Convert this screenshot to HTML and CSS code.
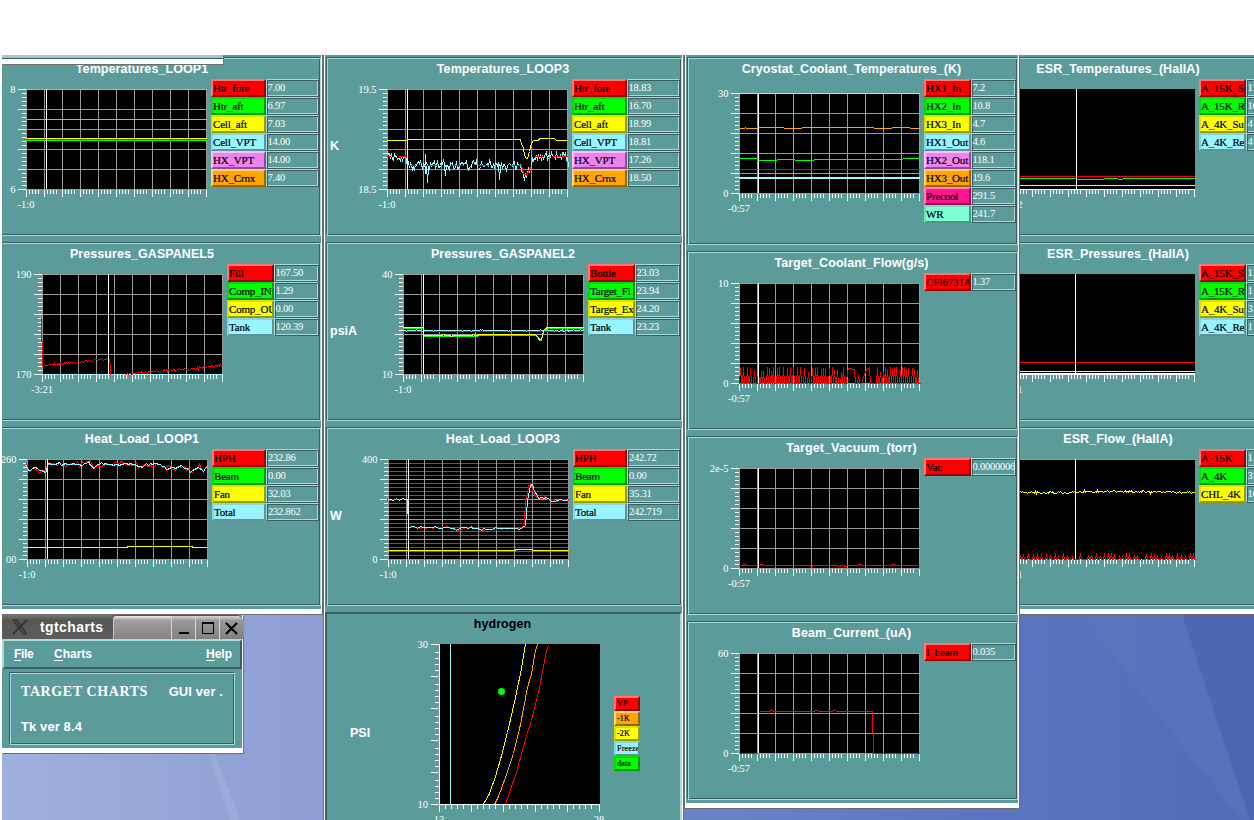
FILE: index.html
```html
<!DOCTYPE html>
<html lang="en">

<head>
    <meta charset="UTF-8">
    <title>tgtcharts</title>
    <link rel="stylesheet" href="styles.css">
</head>

<body>

    <div class="desktop">
        <svg class="wallpaper" width="1252" height="765" viewBox="2 55 1252 765" preserveAspectRatio="none">
            <defs>
                <linearGradient id="wall" x1="0" y1="0" x2="1" y2="0">
                    <stop offset="0" stop-color="#a0b0de" />
                    <stop offset="0.26" stop-color="#8b9dd2" />
                    <stop offset="0.54" stop-color="#6b84c8" />
                    <stop offset="0.8" stop-color="#5a75c0" />
                    <stop offset="1" stop-color="#526bb6" />
                </linearGradient>
            </defs>
            <rect x="2" y="55" width="1252" height="765" fill="url(#wall)" />
            <path d="M207 750 L214 750 L240 820 L230 820Z" fill="#a9b8e4" opacity="0.4" />
            <path d="M1080 614 L1182 614 L1250 820 L1240 820Z" fill="#5f7ac2" opacity="0.35" />
            <path d="M1182 614 L1254 614 L1254 820 L1250 820Z" fill="#4f67b2" />
        </svg>

        <div class="window win-esr" id="esr"></div>
        <div class="window win-loop1" id="loop1"></div>
        <div class="window win-loop3" id="loop3"></div>
        <div class="window win-cryo" id="cryo"></div>

        <div class="window-edge"></div>

        <div class="app">
            <div class="titlebar">
                <div class="caption">
                    <svg width="16" height="16" viewBox="0 0 16 16">
                        <path d="M1 1h4l10 14h-4z" fill="#4a4a4a" stroke="#2a2a2a" />
                        <path d="M15 1L1 15" stroke="#2a2a2a" stroke-width="1.5" />
                    </svg>
                    <span>tgtcharts</span>
                </div>
                <div class="grip"></div>
                <div class="btn"><svg width="16" height="16"><path d="M3 13h10" stroke="#000" stroke-width="2" /></svg></div>
                <div class="btn"><svg width="16" height="16"><path d="M2.5 3v10.500h11v-10.500M2 3h12" fill="none" stroke="#000" /><path d="M2 3h12" stroke="#000" stroke-width="2" /></svg></div>
                <div class="btn last"><svg width="16" height="16"><path d="M2 3l11 11M13 3L2 14" stroke="#000" stroke-width="2.200" /></svg></div>
            </div>
            <div class="menubar">
                <span class="m-file"><u>F</u>ile</span>
                <span><u>C</u>harts</span>
                <span class="m-help"><u>H</u>elp</span>
            </div>
            <div class="about">
                <div class="about-row">
                    <span class="about-name">TARGET CHARTS</span>
                    <span>GUI ver .</span>
                </div>
                <div class="about-row">Tk ver 8.4</div>
            </div>
        </div>
    </div>

    <script src="charts.js"></script>
</body>

</html>
```
FILE: styles.css
```css
body {
    margin: 0;
    background-color: #fff;
    font-family: "Liberation Sans", Arial, sans-serif;
    overflow: hidden;
}

.desktop {
    position: relative;
    width: 1252px;
    height: 765px;
    margin: 55px 0 0 2px;
    overflow: hidden;
}

.wallpaper {
    display: block;
}

/* chart windows */
.window {
    position: absolute;
    top: 0;
    box-sizing: border-box;
    background-color: #5b9c9b;
    border: 1px solid #fff;
    border-top: none;
    border-bottom: 5px solid #fff;
    outline: 1px solid #706c6c;
    padding: 2px 0 3px 1px;
}

.win-loop1 {
    left: -39px;
    width: 359px;
    height: 559px;
}

.win-loop3 {
    left: 322px;
    width: 359px;
    height: 800px;
}

.win-cryo {
    left: 683px;
    width: 334px;
    height: 753px;
}

.win-esr {
    left: 941px;
    width: 351px;
    height: 559px;
}

.window-edge {
    position: absolute;
    left: 0;
    top: 0;
    box-sizing: border-box;
    width: 221px;
    height: 9px;
    background: linear-gradient(#a9c4c8 3px, #3c5f64 3px, #3c5f64 4px, #fff 4px);
    box-shadow: 1px 1px #706c6c;
}

.panel {
    box-sizing: border-box;
    height: 179px;
    margin-bottom: 6px;
    border: 1px solid;
    border-color: #3a5e62 #a8dcdb #a8dcdb #3a5e62;
    box-shadow: inset 1px 1px #a8dcdb, inset -1px -1px #3a5e62;
    padding: 1px;
    overflow: hidden;
}

.panel.tall {
    height: 188px;
}

.panel h2 {
    margin: 0;
    padding-right: 2px;
    height: 20px;
    line-height: 20px;
    font-size: 12.5px;
    font-weight: bold;
    text-align: center;
    letter-spacing: 0.07px;
    color: #fff;
    white-space: nowrap;
}

.panel-body {
    display: flex;
}

.unit {
    flex: 1;
    width: 0;
    padding: 59px 0 0 2px;
    font-size: 12.5px;
    line-height: 16px;
    font-weight: bold;
    color: #fff;
}

.plot {
    flex: none;
    overflow: visible;
    font-family: "Liberation Serif", serif;
    font-size: 10.5px;
}

.legend {
    flex: none;
    width: 92px;
}

.legend.wide {
    width: 108px;
}

.legend.mid {
    width: 107px;
}

.legend-row {
    display: flex;
    height: 18px;
    font-family: "Liberation Serif", serif;
    font-size: 11px;
    line-height: 14px;
}

.tag,
.value {
    flex: 1;
    width: 0;
    box-sizing: border-box;
    overflow: hidden;
    white-space: nowrap;
}

.tag {
    border: 2px solid;
    letter-spacing: -0.2px;
    color: #000;
    -webkit-text-stroke: 0.2px #000;
}

.value {
    border: 1px solid;
    border-color: #a8dcdb #3a5e62 #3a5e62 #a8dcdb;
    box-shadow: inset 1px 1px #3a5e62, inset -1px -1px #a8dcdb;
    padding: 1px 0 1px 1px;
    font-size: 10.5px;
    letter-spacing: -0.25px;
    color: #fff;
}

.red { background-color: #ff0000; border-color: #ff7474 #990000 #990000 #ff7474; }
.green { background-color: #00ff00; border-color: #00e000 #009900 #009900 #00e000; }
.yellow { background-color: #ffff00; border-color: #e0e000 #999900 #999900 #e0e000; }
.cyan { background-color: #98f5ff; border-color: #86d8e0 #5b9399 #5b9399 #86d8e0; }
.violet { background-color: #ee82ee; border-color: #f8c0f8 #8f4e8f #8f4e8f #f8c0f8; }
.orange { background-color: #ffa500; border-color: #ffd274 #996300 #996300 #ffd274; }
.pink { background-color: #ff1493; border-color: #ff80c4 #990c58 #990c58 #ff80c4; }
.aqua { background-color: #7fffd4; border-color: #70e0bb #4c997f #4c997f #70e0bb; }

/* phase diagram */
.phase {
    width: 357px;
    height: 240px;
    margin-left: -1px;
    border: 2px solid;
    border-color: #3a5e62 #a8dcdb #a8dcdb #3a5e62;
    box-shadow: none;
    padding: 0;
}

.phase h2 {
    color: #000;
}

.phase .unit {
    flex: none;
    box-sizing: border-box;
    width: 76px;
    padding: 91px 0 0 23px;
}

.phase .legend {
    width: 26px;
    padding-top: 62px;
}

.phase .legend-row {
    height: 15px;
    font-size: 8px;
    line-height: 11px;
}

.phase .tag {
    padding-left: 1px;
    letter-spacing: 0.2px;
}

/* tgtcharts window */
.app {
    position: absolute;
    left: 0;
    top: 560px;
    width: 240px;
    height: 133px;
    background-color: #5b9c9b;
    border-right: 1px solid #fff;
    border-bottom: 5px solid #fff;
    box-shadow: 1px 1px #706c6c;
    color: #fff;
    font-size: 12px;
    font-weight: bold;
}

.titlebar {
    display: flex;
    width: 242px;
    height: 24px;
    background-color: #555;
    clip-path: polygon(0 0, 236px 0, 242px 6px, 242px 24px, 0 24px);
}

.caption {
    display: flex;
    align-items: center;
    width: 111px;
    background: linear-gradient(#777, #565656 20%, #5c5c5c);
    font-size: 14px;
    letter-spacing: 0.4px;
}

.caption svg {
    margin: 0 12px 0 10px;
}

.grip {
    flex: 1;
    margin-top: 1px;
    border-left: 1px solid #c9c6c9;
    border-radius: 3px 0 0 0;
    background: linear-gradient(#f0eef0, #a29ea2 18%, #868286);
}

.btn {
    display: flex;
    align-items: center;
    justify-content: center;
    box-sizing: border-box;
    width: 24px;
    margin-top: 1px;
    border-left: 1px solid #d8d5d8;
    background: linear-gradient(#d8d5d8, #9a979a 20%, #838083);
}

.btn.last {
    width: 25px;
    padding-right: 1px;
}

.menubar {
    display: flex;
    box-sizing: border-box;
    height: 30px;
    border: 2px solid;
    border-color: #a8dcdb #3a5e62 #3a5e62 #a8dcdb;
    padding: 0 8px 0 10px;
    line-height: 26px;
}

.m-file {
    width: 40px;
    letter-spacing: -0.3px;
}

.m-help {
    margin-left: auto;
}

u {
    text-underline-offset: 2px;
}

.about {
    box-sizing: border-box;
    width: 226px;
    height: 73px;
    margin: 3px 0 0 7px;
    border: 1px solid;
    border-color: #3a5e62 #a8dcdb #a8dcdb #3a5e62;
    box-shadow: inset 1px 1px #a8dcdb, inset -1px -1px #3a5e62;
    padding: 1px 11px 0 11px;
    font-size: 13px;
}

.about-row {
    display: flex;
    justify-content: space-between;
    height: 35px;
    line-height: 35px;
    letter-spacing: 0.1px;
}

.about-name {
    font-family: "Liberation Serif", serif;
    font-size: 14px;
    letter-spacing: 0.6px;
}
```
FILE: charts.js
```javascript
var COLORS = {
    red: "#ff0000", green: "#00ff00", yellow: "#ffff00", cyan: "#98f5ff",
    violet: "#ee82ee", orange: "#ffa500", aqua: "#7fffd4", white: "#ffffff"
};

var seed = 7;
function rnd() {
    seed = (seed * 16807) % 2147483647;
    return seed / 2147483647;
}

// walk along a polyline and shake it by amp pixels
function noisy(points, amp, step) {
    var out = [];
    for (var i = 0; i < points.length - 1; i++) {
        var a = points[i], b = points[i + 1];
        if (b[0] - a[0] < step) {
            out.push(a);
            continue;
        }
        for (var x = a[0]; x < b[0]; x += step) {
            var y = a[1] + (b[1] - a[1]) * (x - a[0]) / (b[0] - a[0]);
            out.push([x, y + (rnd() + rnd() - 1) * amp]);
        }
    }
    out.push(points[points.length - 1]);
    return out;
}

function spikes(from, to, top, gap) {
    var out = [[from, 100]];
    for (var x = from + 1; x < to - 2; x += gap + Math.floor(rnd() * 3)) {
        out.push([x, 100], [x + 1, top + Math.floor(rnd() * rnd() * 8)], [x + 2, 100]);
    }
    out.push([to, 100]);
    return out;
}

function flat(y) {
    return [[-1, y], [180, y]];
}

function rect(x, y, w, h, color) {
    return '<rect x="' + x + '" y="' + y + '" width="' + w + '" height="' + h + '" fill="' + color + '"/>';
}

function drawLine(color, points) {
    var p = points.map(function (pt) {
        return (pt[0] + 0.5) + "," + (Math.round(pt[1]) + 0.5);
    }).join(" ");
    return '<polyline points="' + p + '" fill="none" stroke="' + COLORS[color] + '"/>';
}

function text(x, y, anchor, str) {
    return '<text x="' + x + '" y="' + y + '" text-anchor="' + anchor + '" fill="#fff">' + str + '</text>';
}

function drawPlot(c) {
    var i, s = "", x0 = 36, y0 = c.drop || 10;
    s += rect(0, 0, 181, 101, "#000");
    if (c.fine) {
        for (i = 4; i < 100; i += 4) s += rect(0, i, 181, 1, "#5a5a5a");
    }
    if (!c.plain) {
        for (i = 0; i <= 180; i += 18) s += rect(i, 0, 1, 101, "#999");
        for (i = 0; i <= 100; i += 20) s += rect(0, i, 181, 1, "#999");
    } else {
        s += rect(0, 100, 181, 1, "#fff");
    }
    for (i = 0; i <= 100; i += 4) {
        s += i % 20 ? rect(-4, i, 4, 1, "#fff") : rect(-8, i, 8, 1, "#fff");
    }
    for (i = 0; i <= 180; i += 18) {
        s += rect(i, 101, 1, 7, "#fff");
        for (var k = 3; k <= 12 && i < 180; k += 3) s += rect(i + k, 101, 1, 4, "#fff");
    }
    c.lines.forEach(function (l) { s += drawLine(l[0], l[1]); });
    s += rect(c.cursor, 0, 1, 100, "#fff");
    s += text(-10.5, 3.5, "end", c.max) + text(-10.5, 103.5, "end", c.min);
    s += text(0, 119, "middle", c.start);
    return '<svg class="plot" width="221" height="135" shape-rendering="crispEdges"><g transform="translate(' +
        x0 + ',' + y0 + ')">' + s + '</g></svg>';
}

function drawLegend(rows, size) {
    return '<div class="legend ' + (size || "") + '">' + rows.map(function (r) {
        return '<div class="legend-row"><div class="tag ' + r[0] + '">' + r[1] + '</div>' +
            (r[2] === undefined ? "" : '<div class="value">' + r[2] + '</div>') + '</div>';
    }).join("") + '</div>';
}

function addPanel(id, c) {
    var el = document.createElement("div");
    el.className = "panel " + (c.cls || "");
    el.innerHTML = "<h2>" + c.title + "</h2>" +
        '<div class="panel-body"><div class="unit">' + (c.unit || "") + "</div>" +
        (c.svg || drawPlot(c)) + drawLegend(c.legend, c.size) + "</div>";
    document.getElementById(id).appendChild(el);
}

/* LOOP1 */
addPanel("loop1", {
    title: "Temperatures_LOOP1", size: "wide", max: "8", min: "6", start: "-1:0", cursor: 20,
    lines: [["violet", flat(0)], ["orange", flat(30)], ["yellow", flat(49)], ["red", flat(50)], ["green", flat(51)]],
    legend: [["red", "Htr_fore", "7.00"], ["green", "Htr_aft", "6.97"], ["yellow", "Cell_aft", "7.03"],
        ["cyan", "Cell_VPT", "14.00"], ["violet", "HX_VPT", "14.00"], ["orange", "HX_Crnx", "7.40"]]
});
addPanel("loop1", {
    title: "Pressures_GASPANEL5", max: "190", min: "170", start: "-3:21", cursor: 66,
    lines: [["cyan", flat(100)],
        ["red", [[-1, 43], [-1, 67], [0, 67], [0, 91]].concat(noisy([[1, 91], [20, 89], [35, 88], [58, 85], [67, 85]], 1.5, 1), [[68, 92], [68, 100]])],
        ["red", noisy([[83, 100], [100, 98], [125, 96], [145, 95], [165, 92], [180, 91]], 1.3, 1)]],
    legend: [["red", "Fill", "167.50"], ["green", "Comp_IN", "1.29"], ["yellow", "Comp_OU", "0.00"], ["cyan", "Tank", "120.39"]]
});
var load1 = [[-1, 7], [1, 12], [8, 8], [12, 12], [19, 12], [20, 4], [55, 5], [61, 3], [66, 8], [74, 4], [84, 6],
    [95, 4], [113, 7], [125, 4], [133, 5], [140, 9], [155, 7], [163, 12], [172, 8], [176, 11], [180, 7]];
addPanel("loop1", {
    title: "Heat_Load_LOOP1", size: "mid", max: "260", min: "00", start: "-1:0", cursor: 20,
    lines: [["red", noisy(load1, 4, 2)], ["cyan", noisy(load1, 1.5, 2)],
        ["yellow", [[-1, 88], [100, 88], [100, 87], [165, 87], [165, 88], [180, 88]]], ["green", flat(100)]],
    legend: [["red", "HPH", "232.86"], ["green", "Beam", "0.00"], ["yellow", "Fan", "32.03"], ["cyan", "Total", "232.862"]]
});

/* LOOP3 */
addPanel("loop3", {
    title: "Temperatures_LOOP3", unit: "K", size: "wide", max: "19.5", min: "18.5", start: "-1:0", cursor: 20,
    lines: [["orange", flat(100)],
        ["cyan", noisy([[-1, 68], [19, 67], [20, 76], [132, 76]], 6, 1).concat(noisy([[133, 76], [137, 88], [141, 84], [145, 68], [180, 66]], 6, 1), [[181, 78]])],
        ["cyan", [[39, 76], [40, 93], [41, 78]]], ["cyan", [[57, 76], [58, 86], [59, 76]]], ["cyan", [[111, 75], [112, 90], [113, 78]]],
        ["cyan", [[38, 64], [38, 84]]],
        ["yellow", [[-1, 51], [20, 51], [20, 50], [133, 50], [134, 55], [136, 58], [137, 66], [139, 69], [140, 69], [142, 62], [144, 54],
            [146, 51], [151, 51], [152, 49], [167, 49], [169, 51], [180, 51]]],
        ["red", [[-1, 67], [3, 67]]], ["red", [[10, 67], [19, 67]]], ["red", [[20, 76], [28, 76]]], ["red", [[37, 76], [50, 76]]],
        ["red", [[64, 76], [76, 76]]], ["red", [[90, 76], [101, 76]]], ["red", [[122, 76], [134, 76], [136, 84], [139, 86], [143, 78]]],
        ["red", [[147, 67], [155, 67]]], ["red", [[164, 67], [180, 67]]]],
    legend: [["red", "Htr_fore", "18.83"], ["green", "Htr_aft", "16.70"], ["yellow", "Cell_aft", "18.99"],
        ["cyan", "Cell_VPT", "18.81"], ["violet", "HX_VPT", "17.26"], ["orange", "HX_Crnx", "18.50"]]
});
var fill = [[-1, 54], [20, 54], [20, 62], [60, 62], [90, 61], [132, 61], [135, 64], [136, 66], [138, 66], [140, 57], [144, 54], [180, 54]];
addPanel("loop3", {
    title: "Pressures_GASPANEL2", unit: "psiA", max: "40", min: "10", start: "-1:0", cursor: 20,
    lines: [["red", flat(57)], ["cyan", noisy(flat(56), 0.8, 1)], ["green", fill],
        ["yellow", noisy(fill.map(function (p) { return [p[0], p[1] - 1]; }), 0.6, 2)]],
    legend: [["red", "Bottle", "23.03"], ["green", "Target_Fi", "23.94"], ["yellow", "Target_Ex", "24.20"], ["cyan", "Tank", "23.23"]]
});
var load3 = [[-1, 40], [19, 40], [20, 68], [60, 68], [68, 70], [84, 68], [95, 70], [134, 69], [137, 66], [139, 40], [142, 26],
    [144, 25], [146, 32], [150, 38], [158, 38], [163, 41], [180, 40]];
addPanel("loop3", {
    title: "Heat_Load_LOOP3", unit: "W", size: "mid", max: "400", min: "0", start: "-1:0", cursor: 20, fine: true,
    lines: [["red", noisy(load3.map(function (p) { return [p[0] > 130 && p[0] < 170 ? p[0] - 1.5 : p[0], p[1]]; }), 1.4, 3)],
        ["cyan", noisy(load3, 1.6, 3)],
        ["yellow", [[-1, 91], [127, 91], [127, 90], [144, 90], [144, 91], [180, 91]]], ["green", flat(100)]],
    legend: [["red", "HPH", "242.72"], ["green", "Beam", "0.00"], ["yellow", "Fan", "35.31"], ["cyan", "Total", "242.719"]]
});

/* hydrogen phase diagram */
function phasePlot() {
    var s = rect(0, 0, 161, 161, "#000"), i, k, off = [8, 14, 20, 26];
    s += rect(0, 0, 1, 161, "#fff") + rect(0, 160, 161, 1, "#fff");
    for (i = 0; i <= 160; i += 32) {
        s += rect(-8, i, 8, 1, "#fff") + rect(i, 160, 1, 8, "#fff");
        for (k = 0; k < 4 && i < 160; k++) {
            s += rect(-4, i + off[k], 4, 1, "#fff") + rect(i + off[k] - 2, 160, 1, 5, "#fff");
        }
    }
    s += rect(11, 0, 1, 160, COLORS.cyan);
    s += drawLine("yellow", [[86, 0], [82, 24], [76, 53], [68, 88], [61, 115], [56, 132], [50, 149], [45, 158], [43, 160]]);
    s += drawLine("orange", [[98, 0], [96, 6], [92, 30], [88, 43], [81, 80], [74, 109], [66, 133], [59, 152], [55, 160]]);
    s += drawLine("red", [[109, 1], [107, 6], [100, 43], [92, 76], [87, 91], [77, 128], [70, 148], [66, 160]]);
    s += '<circle cx="62.500" cy="47.500" r="3.500" fill="#00ff00" shape-rendering="auto"/>';
    s += text(-11, 3.5, "end", "30") + text(-11, 163.5, "end", "10") + text(0, 179, "middle", "13") + text(160, 179, "middle", "28");
    return '<svg class="plot" width="211" height="200" shape-rendering="crispEdges"><g transform="translate(36,10)">' + s + "</g></svg>";
}
addPanel("loop3", {
    title: "hydrogen", unit: "PSI", cls: "phase", svg: phasePlot(),
    legend: [["red", "VP"], ["orange", "-1K"], ["yellow", "-2K"], ["cyan", "Freeze"], ["green", "data"]]
});

/* cryostat */
addPanel("cryo", {
    title: "Cryostat_Coolant_Temperatures_(K)", cls: "tall", max: "30", min: "0", start: "-0:57", cursor: 19, drop: 14,
    lines: [["aqua", flat(0)],
        ["orange", [[-1, 35], [5, 35], [6, 34], [7, 35], [18, 35], [19, 34], [44, 34], [45, 35], [62, 35], [63, 34], [134, 34], [135, 35], [152, 35], [153, 34], [170, 34], [171, 35], [180, 35]]],
        ["green", [[-1, 65], [18, 65], [19, 67], [37, 67], [38, 66], [55, 66], [56, 67], [74, 67], [75, 66], [163, 66], [164, 65], [180, 65]]],
        ["red", flat(76)], ["yellow", flat(84)], ["cyan", flat(85)]],
    legend: [["red", "HX1_In", "7.2"], ["green", "HX2_In", "10.8"], ["yellow", "HX3_In", "4.7"], ["cyan", "HX1_Out", "4.6"],
        ["violet", "HX2_Out", "118.1"], ["orange", "HX3_Out", "19.6"], ["pink", "Precool", "291.5"], ["aqua", "WR", "241.7"]]
});
addPanel("cryo", {
    title: "Target_Coolant_Flow(g/s)", max: "10", min: "0", start: "-0:57", cursor: 19,
    lines: [["red", spikes(-1, 107, 84, 2).concat([[108, 88], [109, 85], [115, 86], [116, 100]], spikes(117, 122, 86, 3),
        [[124, 94], [127, 86], [130, 84], [131, 100], [135, 100]], spikes(136, 181, 84, 2))]],
    legend: [["red", "CFI6731A", "1.37"]]
});
addPanel("cryo", {
    title: "Target_Vacuum_(torr)", max: "2e-5", min: "0", start: "-0:57", cursor: 19,
    lines: [["red", noisy([[-1, 97], [18, 97], [180, 97]], 0.7, 2)]],
    legend: [["red", "Vac", "0.0000006"]]
});
addPanel("cryo", {
    title: "Beam_Current_(uA)", max: "60", min: "0", start: "-0:57", cursor: 19,
    lines: [["red", [[-1, 100], [18, 100]]],
        ["red", noisy([[20, 58], [102, 57.8]], 0.7, 3).concat([[133, 58], [133, 79], [134, 79], [134, 100], [180, 100]])]],
    legend: [["red", "I_beam", "0.035"]]
});

/* ESR */
addPanel("esr", {
    title: "ESR_Temperatures_(HallA)", max: "", min: "", start: "-1:2", cursor: 62, plain: true,
    lines: [["red", flat(87)], ["green", [[-1, 89], [61, 89], [62, 90], [89, 90], [90, 89], [103, 89], [104, 90], [108, 90], [109, 89], [180, 89]]],
        ["cyan", flat(96)]],
    legend: [["red", "A_15K_Su", "11"], ["green", "A_15K_R", "10"], ["yellow", "A_4K_Sup", "4"], ["cyan", "A_4K_Re", "4"]]
});
addPanel("esr", {
    title: "ESR_Pressures_(HallA)", max: "", min: "", start: "-1:1", cursor: 61, plain: true,
    lines: [["red", flat(88)], ["yellow", flat(97)], ["white", flat(99)]],
    legend: [["red", "A_15K_Su", "11"], ["green", "A_15K_R", "1"], ["yellow", "A_4K_Sup", "3"], ["cyan", "A_4K_Re", "1"]]
});
addPanel("esr", {
    title: "ESR_Flow_(HallA)", max: "", min: "", start: "-1:1", cursor: 61, plain: true,
    lines: [["green", flat(0)], ["yellow", noisy([[-1, 33], [61, 33], [62, 32], [90, 32], [180, 33]], 1.6, 1)],
        ["red", spikes(-1, 181, 94, 3)]],
    legend: [["red", "A_15K", "1"], ["green", "A_4K", "31"], ["yellow", "CHL_4K", "16"]]
});
```
